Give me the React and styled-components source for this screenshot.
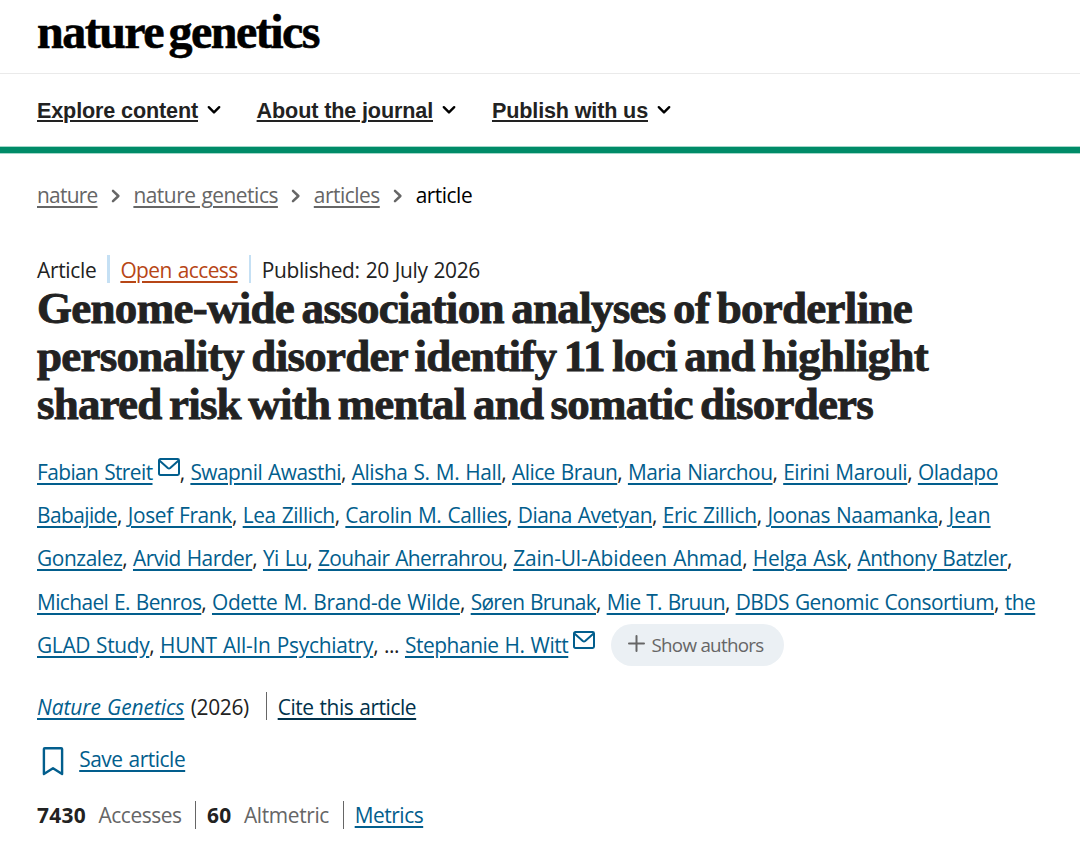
import React, { useLayoutEffect, useRef, useState } from "react";
import styled, { createGlobalStyle, css } from "styled-components";

const GlobalStyle = createGlobalStyle`
  *, *::before, *::after { box-sizing: border-box; }
  html, body { margin: 0; padding: 0; background: #fff; }
  body {
    width: 1080px;
    height: 844px;
    overflow: hidden;
    color: #222;
    font-family: "Open Sans", "Noto Sans", sans-serif;
    font-size: 20.9px;
    word-spacing: 1px;
  }
`;

const tones = {
  link: "#025e8d",
  open: "#b74616",
  muted: "#666",
  dark: "#222",
  deep: "#01324b",
  black: "#000",
};

const Measure = styled.span`
  display: inline-block;
  flex: none;
  width: ${(p) => p.$width}px;
  white-space: nowrap;
`;

const Label = styled.span`
  color: ${(p) => tones[p.$tone] || "inherit"};
  font-weight: ${(p) => (p.$bold ? 700 : "inherit")};
  font-style: ${(p) => (p.$italic ? "italic" : "inherit")};
  ${(p) =>
    p.$underline &&
    css`
      text-decoration: underline;
      text-decoration-thickness: 2px;
      text-underline-offset: ${p.$offset || 3}px;
      cursor: pointer;
    `}
`;

/* Text tracked so that it spans a given measure. */
function Fit({ width, children, ...rest }) {
  const ref = useRef(null);
  const [tracking, setTracking] = useState(0);
  useLayoutEffect(() => {
    const natural = ref.current.getBoundingClientRect().width;
    setTracking((width - natural) / children.length);
  }, [width, children]);
  return (
    <Measure $width={width}>
      <Label ref={ref} style={{ letterSpacing: tracking }} {...rest}>
        {children}
      </Label>
    </Measure>
  );
}

const Page = styled.div`
  display: flex;
  flex-direction: column;
  width: 1080px;
  height: 844px;
`;

const Header = styled.header`
  height: 74px;
  padding-left: 37px;
  border-bottom: 1px solid #eaeaea;
`;

const Logo = styled.div`
  font: 700 48px/63px "Liberation Serif", serif;
  color: #000;
  word-spacing: -5px;
  -webkit-text-stroke: 0.6px #000;
`;

const Nav = styled.nav`
  display: flex;
  height: 72px;
  padding-left: 37px;
  font: 700 21.6px/73px "Liberation Sans", Arial, sans-serif;
  word-spacing: 0;
`;

const NavItem = styled.div`
  display: flex;
  align-items: center;
  width: ${(p) => p.$width}px;
`;

const NavChevron = styled.svg`
  width: 14px;
  height: 10px;
  margin-left: 9px;
`;

const Stripe = styled.div`
  height: 8px;
  background: #008b68;
  border: solid #a3d8ca;
  border-width: 1px 0;
`;

const Main = styled.main`
  display: flex;
  flex-direction: column;
  padding-left: 37px;
`;

const Breadcrumbs = styled.nav`
  display: flex;
  align-items: center;
  height: 32px;
  margin-top: 25px;
  line-height: 32px;
`;

const CrumbChevron = styled.svg`
  width: 10px;
  height: 14px;
  margin: 2px 12.6px 0 13.3px;
`;

const Row = styled.div`
  display: flex;
  height: ${(p) => p.$height || 28}px;
  margin-top: ${(p) => p.$top}px;
  line-height: ${(p) => p.$line || 31}px;
`;

const Divider = styled.i`
  flex: none;
  width: ${(p) => p.$size}px;
  height: 28px;
  margin: 0 ${(p) => p.$after}px 0 ${(p) => p.$before}px;
  background: ${(p) => p.$color};
`;

const Title = styled.h1`
  display: flex;
  flex-direction: column;
  margin: 0;
  padding-top: 1px;
  font: 700 45px/48px "Liberation Serif", serif;
  word-spacing: -3px;
  -webkit-text-stroke: 0.9px #222;
`;

const Authors = styled.div`
  margin-top: 23px;
`;

const AuthorLine = styled.div`
  display: flex;
  height: 43.2px;
  line-height: 43px;
`;

const Comma = styled.span`
  flex: none;
  width: 10.7px;
`;

const Ellipsis = styled.span`
  flex: none;
  width: 21px;
  letter-spacing: -0.5px;
`;

const Mail = styled.svg`
  flex: none;
  width: 22px;
  height: 18px;
  margin: 7px 0 0 5.2px;
`;

const ShowButton = styled.button`
  display: flex;
  align-items: center;
  width: 173px;
  height: 42px;
  margin: 0 0 0 15.5px;
  padding: 0 0 0 17px;
  border: 0;
  border-radius: 21px;
  background: #ebf0f4;
  color: #666;
  font: 400 18.8px/44px "Open Sans", sans-serif;
`;

const Plus = styled.svg`
  width: 17px;
  height: 17px;
  margin: -3px 6.5px 0 0;
`;

const Bookmark = styled.svg`
  width: 22px;
  height: 30px;
  margin: 0 15.5px 0 4.7px;
`;

const Gap = styled.span`
  flex: none;
  width: ${(p) => p.$size}px;
`;

const MailIcon = () => (
  <Mail viewBox="0 0 22 18" fill="none" stroke="#025e8d" strokeWidth="2" strokeLinejoin="round">
    <rect x="1" y="1" width="20" height="16" rx="1.4" />
    <path d="M1.4 2.4 9.8 10Q11 11 12.2 10L20.6 2.4" />
  </Mail>
);

const navigation = [
  { text: "Explore content", width: 161, slot: 219.6 },
  { text: "About the journal", width: 176.4, slot: 235.4 },
  { text: "Publish with us", width: 156, slot: 200 },
];

const crumbs = [
  ["nature", 60.5],
  ["nature genetics", 144.5],
  ["articles", 66],
];

const titleLines = [
  ["Genome-wide association analyses of borderline", 875],
  ["personality disorder identify 11 loci and highlight", 891],
  ["shared risk with mental and somatic disorders", 836],
];

const authorLines = [
  [["Fabian Streit", 115.5, true], ["Swapnil Awasthi", 150.6], ["Alisha S. M. Hall", 149.7], ["Alice Braun", 105.2], ["Maria Niarchou", 144.6], ["Eirini Marouli", 124], ["Oladapo", 80]],
  [["Babajide", 80], ["Josef Frank", 104.3], ["Lea Zillich", 92], ["Carolin M. Callies", 161.7], ["Diana Avetyan", 134.3], ["Eric Zillich", 94], ["Joonas Naamanka", 170.5], ["Jean", 42]],
  [["Gonzalez", 85.3], ["Arvid Harder", 119.3], ["Yi Lu", 44.3], ["Zouhair Aherrahrou", 184.5], ["Zain-Ul-Abideen Ahmad", 229], ["Helga Ask", 94], ["Anthony Batzler", 149.5]],
  [["Michael E. Benros", 164.3], ["Odette M. Brand-de Wilde", 248], ["Søren Brunak", 125.3], ["Mie T. Bruun", 118.3], ["DBDS Genomic Consortium", 258.4], ["the", 30.5]],
  [["GLAD Study", 112.3], ["HUNT All-In Psychiatry", 213.3]],
];

const wrapped = ["Oladapo", "Jean", "the"];

export default function App() {
  return (
    <>
      <GlobalStyle />
      <Page>
        <Header>
          <Logo>
            <Fit width={282}>nature genetics</Fit>
          </Logo>
        </Header>
        <Nav>
          {navigation.map((n) => (
            <NavItem key={n.text} $width={n.slot}>
              <Fit width={n.width} $underline $offset={2} $tone="dark">{n.text}</Fit>
              <NavChevron viewBox="0 0 14 10" fill="none" stroke="#000" strokeWidth="2.4" strokeLinecap="round" strokeLinejoin="round">
                <path d="M1.8 2.2 7 7.4l5.2-5.2" />
              </NavChevron>
            </NavItem>
          ))}
        </Nav>
        <Stripe />
        <Main>
          <Breadcrumbs>
            {crumbs.map(([text, width]) => (
              <React.Fragment key={text}>
                <Fit width={width} $underline $tone="muted">{text}</Fit>
                <CrumbChevron viewBox="0 0 10 14" fill="none" stroke="#666" strokeWidth="2.5" strokeLinecap="round" strokeLinejoin="round">
                  <path d="m2 1.8 5.4 5.2L2 12.2" />
                </CrumbChevron>
              </React.Fragment>
            ))}
            <Fit width={56.5} $tone="black">article</Fit>
          </Breadcrumbs>

          <Row $top={44}>
            <Fit width={59.5}>Article</Fit>
            <Divider $size={2.4} $before={10.9} $after={10.6} $color="#c5e0f4" />
            <Fit width={117.3} $underline $tone="open">Open access</Fit>
            <Divider $size={2.4} $before={10.9} $after={10.9} $color="#c5e0f4" />
            <Fit width={218}>Published: 20 July 2026</Fit>
          </Row>

          <Title>
            {titleLines.map(([text, width]) => (
              <Fit key={text} width={width}>{text}</Fit>
            ))}
          </Title>

          <Authors>
            {authorLines.map((line, i) => (
              <AuthorLine key={i}>
                {line.map(([name, width, mail]) => (
                  <React.Fragment key={name}>
                    <Fit width={width} $underline $tone="link">{name}</Fit>
                    {mail && <MailIcon />}
                    {!wrapped.includes(name) && <Comma>,</Comma>}
                  </React.Fragment>
                ))}
                {i === 4 && (
                  <>
                    <Ellipsis>...</Ellipsis>
                    <Fit width={163.3} $underline $tone="link">Stephanie H. Witt</Fit>
                    <MailIcon />
                    <ShowButton>
                      <Plus viewBox="0 0 17 17" stroke="#666" strokeWidth="2" strokeLinecap="round">
                        <path d="M8.5 1v15M1 8.5h15" />
                      </Plus>
                      <Fit width={112}>Show authors</Fit>
                    </ShowButton>
                  </>
                )}
              </AuthorLine>
            ))}
          </Authors>

          <Row $top={25}>
            <Fit width={147.3} $underline $italic $tone="link">Nature Genetics</Fit>
            <Gap $size={6.5} />
            <Fit width={58}>(2026)</Fit>
            <Divider $size={1} $before={17.2} $after={10.7} $color="#666" />
            <Fit width={138.5} $underline $tone="deep">Cite this article</Fit>
          </Row>

          <Row $top={26} $height={30} $line={26}>
            <Bookmark viewBox="0 0 22 30" fill="none" stroke="#025e8d" strokeWidth="2.4" strokeLinejoin="round">
              <path d="M2.8 2.2h16.4q.9 0 .9.9V28l-9.1-5.8L1.9 28V3.1q0-.9.9-.9Z" />
            </Bookmark>
            <Fit width={106} $underline $tone="link">Save article</Fit>
          </Row>

          <Row $top={25} $line={29}>
            <Fit width={49} $bold>7430</Fit>
            <Gap $size={12.5} />
            <Fit width={83} $tone="muted">Accesses</Fit>
            <Divider $size={1} $before={13.5} $after={11} $color="#666" />
            <Fit width={24.5} $bold>60</Fit>
            <Gap $size={12.5} />
            <Fit width={85} $tone="muted">Altmetric</Fit>
            <Divider $size={1} $before={14} $after={10.7} $color="#666" />
            <Fit width={68.5} $underline $tone="link">Metrics</Fit>
          </Row>
        </Main>
      </Page>
    </>
  );
}
